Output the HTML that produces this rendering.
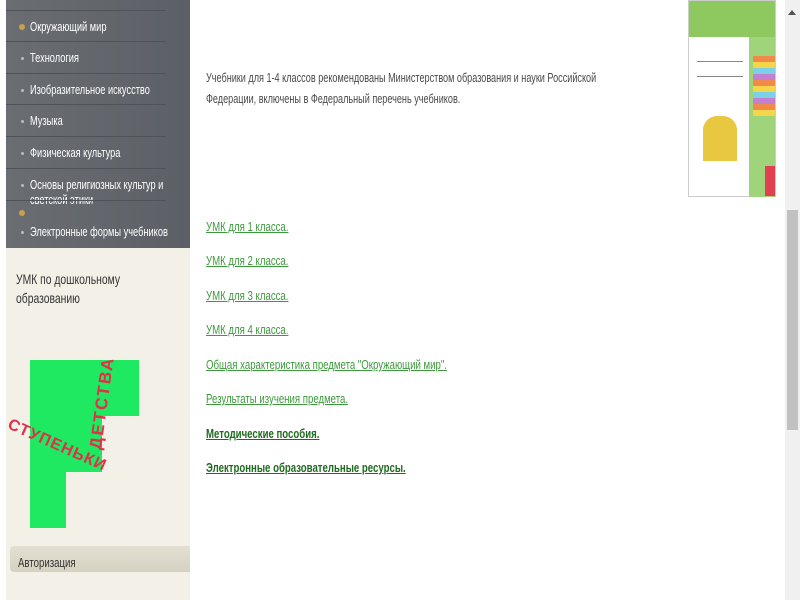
<!DOCTYPE html>
<html><head><meta charset="utf-8"><style>
*{margin:0;padding:0;box-sizing:border-box}
body{width:800px;height:600px;overflow:hidden;background:#fff;font-family:"Liberation Sans",sans-serif;position:relative}
.c{display:inline-block;transform:scaleX(0.74);transform-origin:left top;white-space:nowrap}
.side{position:absolute;left:6px;top:0;width:184px;height:600px;background:#f3f1e7}
.menu{position:absolute;left:0;top:0;width:184px;height:248px;background:linear-gradient(90deg,#6a6d72,#5c5f65)}
.mi{position:absolute;left:0;width:184px;color:#fff;font-size:12.5px;padding-left:24px;line-height:15px;white-space:nowrap}
.mi:before{content:"";position:absolute;left:15px;top:6px;width:3px;height:3px;border-radius:50%;background:#bbb}
.mi.y:before{background:#c9a04a;width:6px;height:6px;left:13px;top:4px}
.ln{position:absolute;left:0;width:160px;height:1px;background:#4f5257}
.t{position:absolute;color:#333;font-size:14px;white-space:nowrap}
.main{position:absolute;left:206px;font-size:13px;color:#4a4a4a;line-height:21px}
.main .c{transform:scaleX(0.7)}
a{color:#3c9a3c;text-decoration:underline;position:absolute;left:206px;font-size:13px;transform:scaleX(0.74);transform-origin:left top;white-space:nowrap}
a.b{color:#1f6b1f;font-weight:bold;transform:scaleX(0.74)}
</style></head><body>
<div class="side">
<div class="menu">
<div class="ln" style="top:10px"></div>
<div class="mi y" style="top:20px"><span class="c">Окружающий мир</span></div>
<div class="ln" style="top:41px"></div>
<div class="mi" style="top:51px"><span class="c">Технология</span></div>
<div class="ln" style="top:73px"></div>
<div class="mi" style="top:83px"><span class="c">Изобразительное искусство</span></div>
<div class="ln" style="top:104px"></div>
<div class="mi" style="top:114px"><span class="c">Музыка</span></div>
<div class="ln" style="top:136px"></div>
<div class="mi" style="top:146px"><span class="c">Физическая культура</span></div>
<div class="ln" style="top:168px"></div>
<div class="mi" style="top:178px"><span class="c">Основы религиозных культур и<br>светской этики</span></div>
<div class="ln" style="top:200px"></div>
<div style="position:absolute;left:13px;top:210px;width:6px;height:6px;border-radius:50%;background:#c9a04a"></div>
<div class="mi" style="top:225px"><span class="c">Электронные формы учебников</span></div>
</div>
<div class="t" style="left:10px;top:270px;line-height:19px"><span class="c">УМК по дошкольному<br>образованию</span></div>
<div style="position:absolute;left:24px;top:360px;width:109px;height:56px;background:#1fe861"></div>
<div style="position:absolute;left:24px;top:416px;width:72px;height:56px;background:#1fe861"></div>
<div style="position:absolute;left:24px;top:472px;width:36px;height:56px;background:#1fe861"></div>
<div style="position:absolute;left:6px;top:416px;color:#e0304a;font-weight:bold;font-size:16px;transform:rotate(24deg);transform-origin:left top;letter-spacing:1px">СТУПЕНЬКИ</div>
<div style="position:absolute;left:80px;top:448px;color:#e0304a;font-weight:bold;font-size:17px;transform:rotate(-82deg);transform-origin:left top;letter-spacing:2px">ДЕТСТВА</div>
<div style="position:absolute;left:4px;top:546px;width:180px;height:26px;background:linear-gradient(#e2dfd2,#d6d2c2);border-radius:4px 0 0 4px"></div>
<div class="t" style="left:12px;top:555px;font-size:13px"><span class="c">Авторизация</span></div>
</div>
<div class="main" style="top:67px"><span class="c">Учебники для 1-4 классов рекомендованы Министерством образования и науки Российской<br>Федерации, включены в Федеральный перечень учебников.</span></div>
<a style="top:219px">УМК для 1 класса.</a>
<a style="top:253px">УМК для 2 класса.</a>
<a style="top:288px">УМК для 3 класса.</a>
<a style="top:322px">УМК для 4 класса.</a>
<a style="top:357px">Общая характеристика предмета "Окружающий мир".</a>
<a style="top:391px">Результаты изучения предмета.</a>
<a class="b" style="top:426px">Методические пособия.</a>
<a class="b" style="top:460px">Электронные образовательные ресурсы.</a>
<div style="position:absolute;left:688px;top:0;width:88px;height:197px;background:#fff;border:1px solid #ccc">
<div style="position:absolute;left:0;top:0;width:86px;height:36px;background:#8dc95e"></div>
<div style="position:absolute;left:60px;top:36px;width:26px;height:160px;background:#9fd47a"></div>
<div style="position:absolute;left:64px;top:55px;width:22px;height:60px;background:repeating-linear-gradient(#f08a4a 0 6px,#f5d54a 6px 12px,#7bd0e8 12px 18px,#c47fd0 18px 24px)"></div>
<div style="position:absolute;left:8px;top:60px;width:46px;height:1px;background:#888"></div>
<div style="position:absolute;left:8px;top:75px;width:46px;height:1px;background:#888"></div>
<div style="position:absolute;left:14px;top:115px;width:34px;height:45px;background:#e8c840;border-radius:14px 14px 0 0"></div>
<div style="position:absolute;left:76px;top:165px;width:10px;height:30px;background:#e04050"></div>
</div>
<div style="position:absolute;left:785px;top:0;width:15px;height:600px;background:#f0f0f0"></div>
<div style="position:absolute;left:787px;top:210px;width:11px;height:220px;background:#c1c1c1"></div>
<div style="position:absolute;left:788px;top:10px;width:0;height:0;border-left:4px solid transparent;border-right:4px solid transparent;border-bottom:5px solid #555"></div>
</body></html>
